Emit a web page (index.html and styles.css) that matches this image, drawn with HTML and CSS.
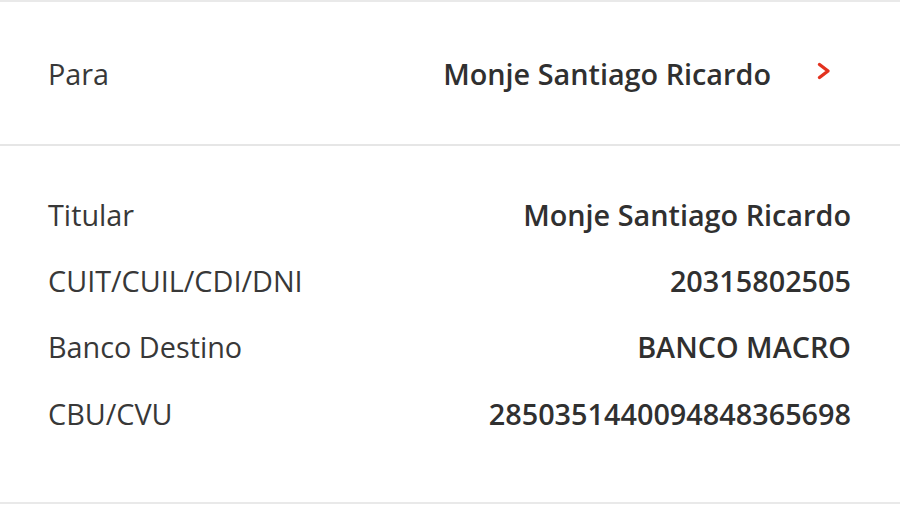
FILE: index.html
```html
<!DOCTYPE html>
<html lang="es">
<head>
<meta charset="utf-8">
<link rel="stylesheet" href="styles.css">
</head>
<body>
<div class="screen">
  <div class="para-row">
    <span class="label">Para</span>
    <span class="para-value">
      <span class="value">Monje Santiago Ricardo</span>
      <svg class="chevron" width="14" height="18" viewBox="0 0 14 18"><path d="M2.5 2.5 L11 9 L2.5 15.5" fill="none" stroke="#e3321f" stroke-width="3.4" stroke-linecap="round" stroke-linejoin="round"/></svg>
    </span>
  </div>
  <div class="details">
    <div class="row"><span class="label">Titular</span><span class="value">Monje Santiago Ricardo</span></div>
    <div class="row"><span class="label">CUIT/CUIL/CDI/DNI</span><span class="value">20315802505</span></div>
    <div class="row"><span class="label">Banco Destino</span><span class="value">BANCO MACRO</span></div>
    <div class="row"><span class="label">CBU/CVU</span><span class="value">2850351440094848365698</span></div>
  </div>
</div>
</body>
</html>
```
FILE: styles.css
```css
html, body {
  margin: 0;
  padding: 0;
  background: #ffffff;
}
body {
  font-family: "Open Sans", "Noto Sans", sans-serif;
  color: #333333;
}
.screen {
  width: 900px;
  height: 506px;
  border-top: 2px solid #e9e9e9;
  box-sizing: border-box;
}
.para-row {
  height: 142px;
  display: flex;
  align-items: center;
  justify-content: space-between;
  padding: 0 69px 0 48px;
  border-bottom: 2px solid #e6e6e6;
}
.para-value {
  display: flex;
  align-items: center;
  gap: 46px;
}
.chevron {
  display: block;
  margin-top: -5px;
}
.label {
  font-size: 28.8px;
  font-weight: 400;
  color: #383838;
}
.value {
  font-size: 28.8px;
  font-weight: 600;
  color: #303030;
}
.details {
  height: 358px;
  box-sizing: border-box;
  padding: 35px 49px 0 48px;
  border-bottom: 2px solid #e9e9e9;
}
.row {
  height: 66.3px;
  display: flex;
  align-items: center;
  justify-content: space-between;
}
```
